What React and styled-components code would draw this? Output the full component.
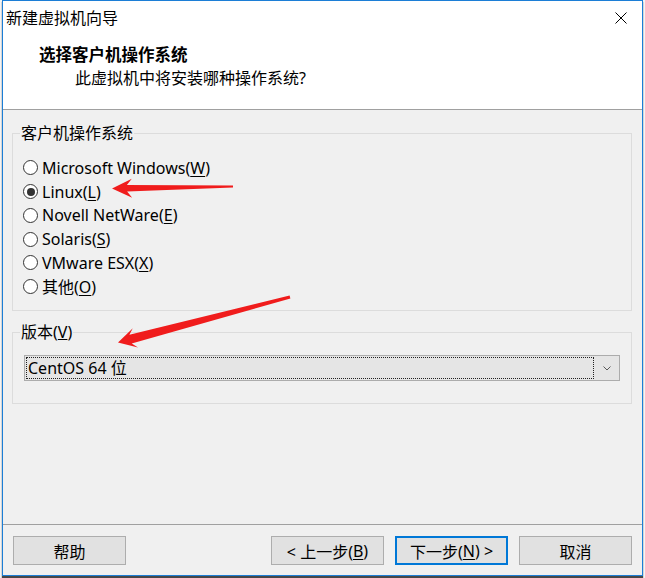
import React from "react";
import styled, { createGlobalStyle } from "styled-components";

const GlobalStyle = createGlobalStyle`
  html, body {
    margin: 0;
    padding: 0;
    background: #ffffff;
  }
  body {
    font-family: "Noto Sans", "Noto Sans CJK SC", sans-serif;
    font-size: 16px;
    color: #000;
  }
`;

const osList = [
  { label: "Microsoft Windows", key: "W" },
  { label: "Linux", key: "L", checked: true },
  { label: "Novell NetWare", key: "E" },
  { label: "Solaris", key: "S" },
  { label: "VMware ESX", key: "X" },
  { label: "其他", key: "O" },
];

// red annotation arrows: tail -> tip, with a tapered shaft and swept barbs
const arrows = [
  { tail: [233, 186.5], tip: [112, 188.5], t: 1.1, neck: 3.2, barb: 9.5, head: 15, sweep: 5 },
  { tail: [290, 297], tip: [118, 342.5], t: 1.5, neck: 4.6, barb: 10, head: 13, sweep: 5 },
];

function arrowPoints({ tail, tip, t, neck, barb, head, sweep }) {
  const [tx, ty] = tail;
  const [px, py] = tip;
  const len = Math.hypot(px - tx, py - ty);
  const ux = (px - tx) / len;
  const uy = (py - ty) / len;
  const nx = -uy;
  const ny = ux;
  const hx = px - ux * head;
  const hy = py - uy * head;
  const bx = px - ux * (head + sweep);
  const by = py - uy * (head + sweep);
  const pts = [
    [tx + nx * t, ty + ny * t],
    [hx + nx * neck, hy + ny * neck],
    [bx + nx * barb, by + ny * barb],
    [px, py],
    [bx - nx * barb, by - ny * barb],
    [hx - nx * neck, hy - ny * neck],
    [tx - nx * t, ty - ny * t],
  ];
  return pts.map((p) => p.map((v) => v.toFixed(1)).join(",")).join(" ");
}

export default function App() {
  return (
    <>
      <GlobalStyle />
      <Screen>
        <Window>
          <TitleBar>
            <span>新建虚拟机向导</span>
            <CloseButton>
              <svg width="12" height="12" viewBox="0 0 12 12">
                <path d="M0.5 0.5 L11.5 11.5 M11.5 0.5 L0.5 11.5" stroke="#000" strokeWidth="1" fill="none" />
              </svg>
            </CloseButton>
          </TitleBar>
          <Header>
            <HeaderTitle>选择客户机操作系统</HeaderTitle>
            <HeaderSub>此虚拟机中将安装哪种操作系统?</HeaderSub>
          </Header>
          <Body>
            <Group $height={188}>
              <legend>客户机操作系统</legend>
              {osList.map((os) => (
                <RadioRow key={os.key}>
                  <Radio $checked={os.checked} />
                  <span>
                    {os.label}(<u>{os.key}</u>)
                  </span>
                </RadioRow>
              ))}
            </Group>
            <Group $height={82} $gap={11}>
              <legend>
                版本(<u>V</u>)
              </legend>
              <Combo>
                <ComboValue>CentOS 64 位</ComboValue>
                <ComboArrow>
                  <svg width="8" height="5" viewBox="0 0 8 5">
                    <path d="M0.5 0.5 L4 4 L7.5 0.5" stroke="#5a5a5a" strokeWidth="1" fill="none" />
                  </svg>
                </ComboArrow>
              </Combo>
            </Group>
          </Body>
          <Footer>
            <Button>帮助</Button>
            <Spacer />
            <Button>
              &lt; 上一步(<u>B</u>)
            </Button>
            <Button $default>
              下一步(<u>N</u>) &gt;
            </Button>
            <Button>取消</Button>
          </Footer>
        </Window>
        <Marks width="645" height="578" viewBox="0 0 645 578">
          {arrows.map((a, i) => (
            <polygon key={i} points={arrowPoints(a)} fill="#f01c1c" />
          ))}
        </Marks>
      </Screen>
    </>
  );
}

const Screen = styled.div`
  position: relative;
  width: 645px;
  height: 578px;
  overflow: hidden;
  background: #f4f4f4;
`;

const Window = styled.div`
  box-sizing: border-box;
  margin-left: 2px;
  width: 641px;
  height: 576px;
  border: 1px solid #1c7ed6;
  box-shadow: 0 2px 1px rgba(40, 40, 40, 0.85);
  display: flex;
  flex-direction: column;
  background: #f0f0f0;
`;

const TitleBar = styled.div`
  height: 34px;
  flex-shrink: 0;
  display: flex;
  align-items: center;
  justify-content: space-between;
  padding-left: 3px;
  background: #fff;
  font-size: 16px;
  line-height: 34px;
`;

const CloseButton = styled.div`
  width: 42px;
  height: 34px;
  display: flex;
  align-items: center;
  justify-content: center;
  svg {
    margin-top: -1px;
  }
`;

const Header = styled.div`
  box-sizing: border-box;
  height: 75px;
  flex-shrink: 0;
  padding: 9px 0 0 36px;
  background: #fff;
  border-bottom: 1px solid #a0a0a0;
`;

const HeaderTitle = styled.div`
  font-size: 16.5px;
  font-weight: 700;
  line-height: 22px;
`;

const HeaderSub = styled.div`
  margin: 1px 0 0 36px;
  font-size: 16px;
  line-height: 22px;
`;

const Body = styled.div`
  flex: 1;
  padding: 13px 10px 0 9px;
`;

const Group = styled.fieldset`
  box-sizing: border-box;
  height: ${(p) => p.$height}px;
  margin: ${(p) => p.$gap || 0}px 0 0;
  padding: 13px 11px 0;
  border: 1px solid #dcdcdc;
  min-width: 0;
  legend {
    margin-left: -4px;
    padding: 0 1px;
    font-size: 16px;
    line-height: 20px;
  }
`;

const RadioRow = styled.div`
  height: 23.75px;
  display: flex;
  align-items: center;
  gap: 4px;
  margin-left: -1px;
  font-size: 16px;
  line-height: 20px;
  white-space: nowrap;
  u {
    text-underline-offset: 2px;
  }
`;

const Radio = styled.span`
  box-sizing: border-box;
  width: 15px;
  height: 15px;
  border: 1px solid #333;
  border-radius: 50%;
  background: #fff;
  flex-shrink: 0;
  display: flex;
  align-items: center;
  justify-content: center;
  &::after {
    content: "";
    width: 8px;
    height: 8px;
    border-radius: 50%;
    background: #333;
    display: ${(p) => (p.$checked ? "block" : "none")};
  }
`;

const Combo = styled.div`
  box-sizing: border-box;
  height: 26px;
  border: 1px solid #acacac;
  background: #e5e5e5;
  display: flex;
  align-items: stretch;
`;

const ComboValue = styled.div`
  flex: 1;
  margin: 1px 0 1px 1px;
  padding-left: 1px;
  border: 1px dotted #202020;
  font-size: 16px;
  line-height: 20px;
`;

const ComboArrow = styled.div`
  width: 25px;
  display: flex;
  align-items: center;
  justify-content: center;
`;

const Footer = styled.div`
  box-sizing: border-box;
  height: 51px;
  flex-shrink: 0;
  display: flex;
  align-items: flex-start;
  gap: 11px;
  padding: 11px 10px 0;
  border-top: 1px solid #a0a0a0;
`;

const Spacer = styled.div`
  flex: 1;
`;

const Button = styled.div`
  box-sizing: border-box;
  width: 113px;
  height: 29px;
  display: flex;
  align-items: center;
  justify-content: center;
  background: #e1e1e1;
  border: ${(p) => (p.$default ? "2px solid #0078d7" : "1px solid #adadad")};
  font-size: 16px;
  white-space: pre;
  u {
    text-underline-offset: 2px;
  }
`;

const Marks = styled.svg`
  position: absolute;
  left: 0;
  top: 0;
  pointer-events: none;
`;
